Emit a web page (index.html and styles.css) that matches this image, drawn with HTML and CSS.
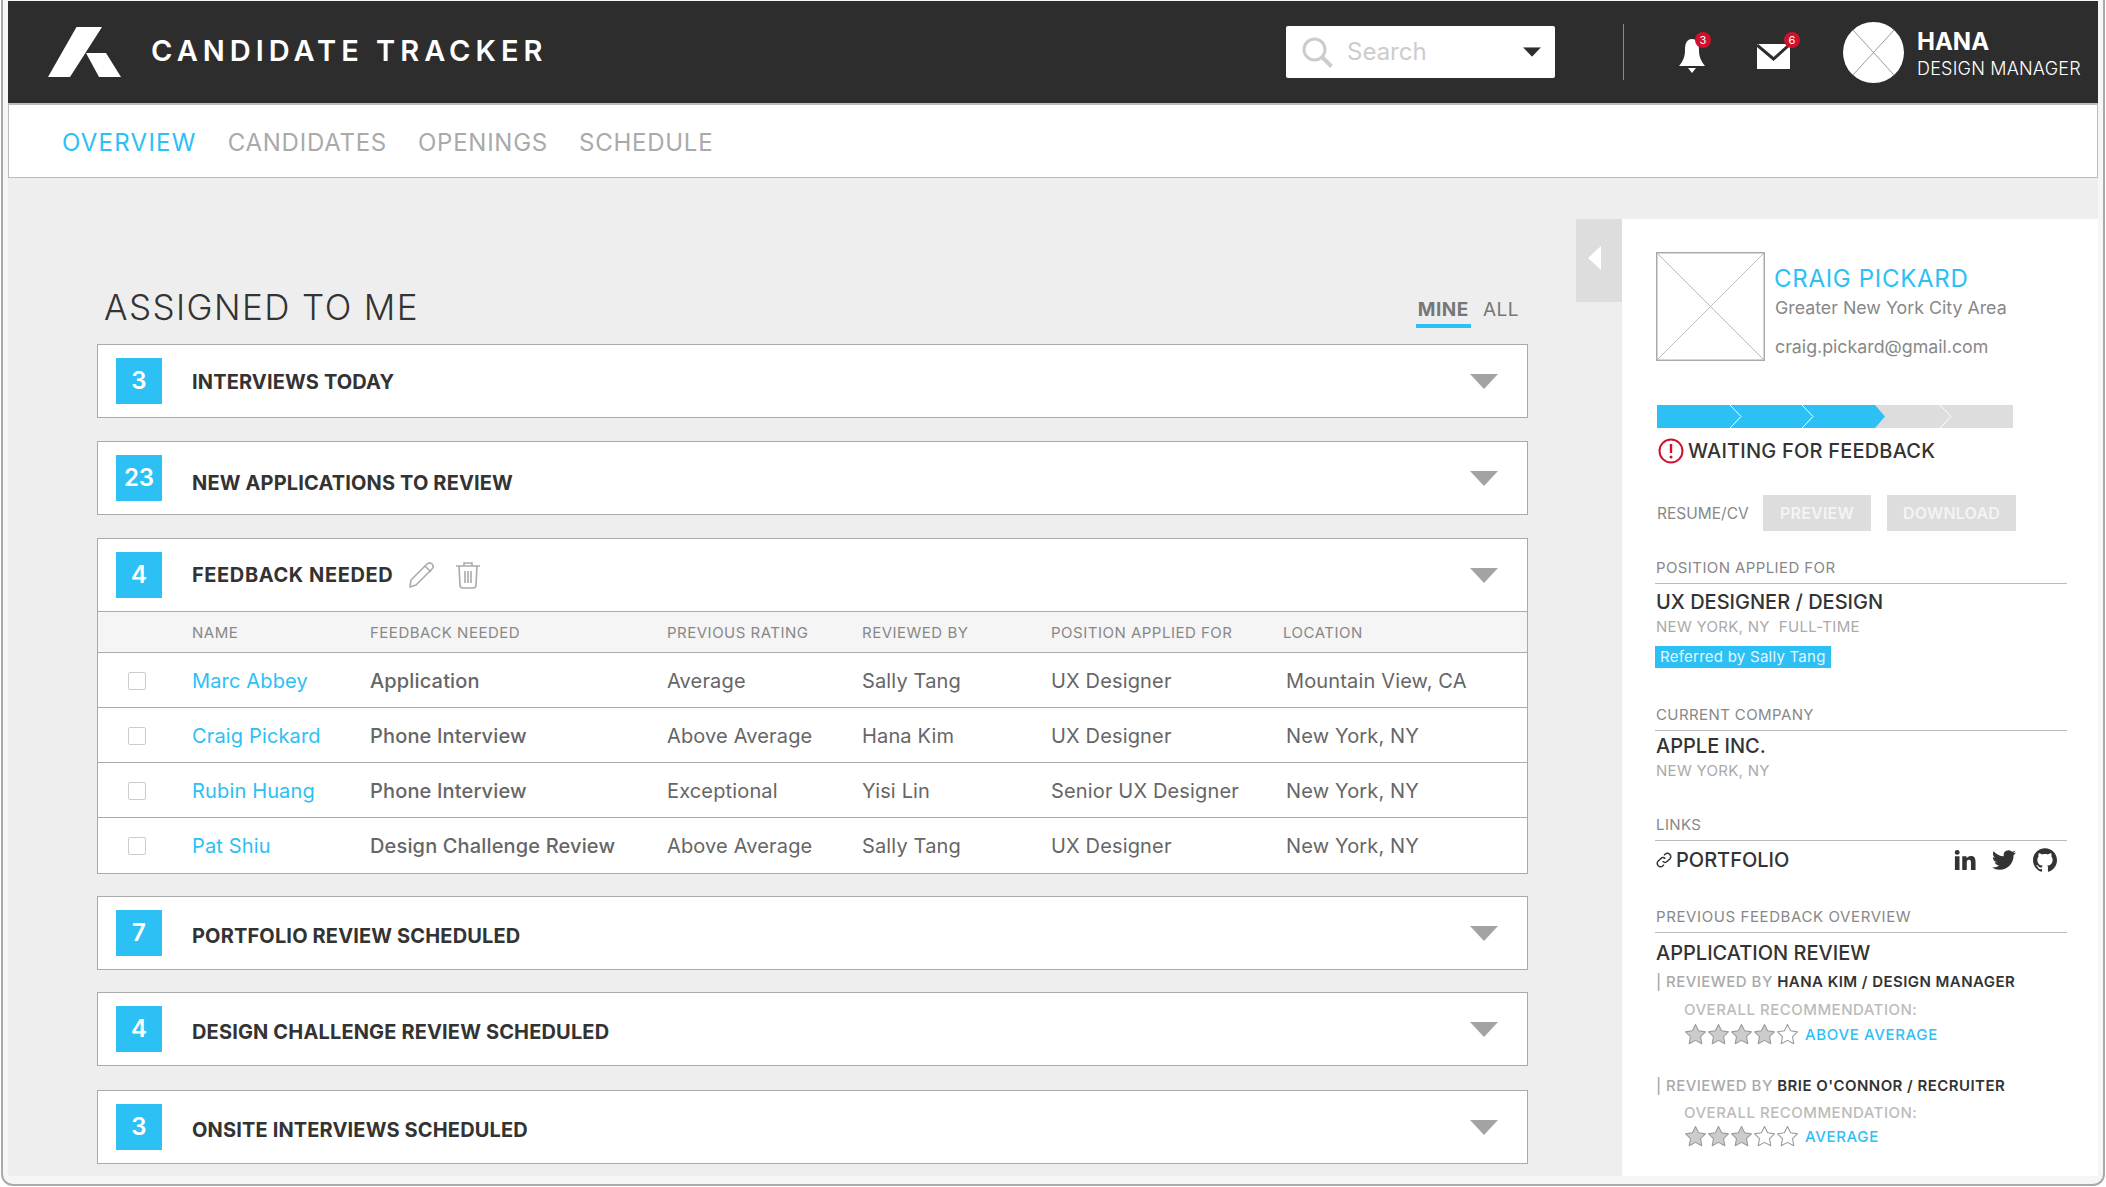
FILE: index.html
```html
<!DOCTYPE html>
<html lang="en">
<head>
<meta charset="utf-8">
<title>Candidate Tracker</title>
<link rel="stylesheet" href="styles.css">
</head>
<body>
<svg class="defs" width="0" height="0" aria-hidden="true">
  <defs>
    <symbol id="star" viewBox="1 1 22 22"><path d="M12 2.500l3 6 6.500 1-4.700 4.500 1.200 6.800-6-3.200-6 3.200 1.200-6.800L2.500 9.500l6.500-1z" stroke-linejoin="round"/></symbol>
    <symbol id="tri" viewBox="0 0 28 15"><path d="M0 0h28L14 15z"/></symbol>
  </defs>
</svg>
<div class="window">
  <header class="topbar">
    <svg class="logo" viewBox="0 0 74 50"><path d="M28.500 0H54L22 50H0z" fill="#fff"/><path d="M38 26h20l15 24H51z" fill="#fff"/></svg>
    <div class="brand">CANDIDATE TRACKER</div>
    <div class="search">
      <svg class="search-icon" viewBox="0 0 31 31"><circle cx="12.500" cy="12.500" r="10.500" fill="none" stroke="#ccc" stroke-width="3"/><path d="M20 20l9.500 9.500" stroke="#ccc" stroke-width="4"/></svg>
      <span class="search-text">Search</span>
      <svg class="search-caret" viewBox="0 0 28 15"><use href="#tri"/></svg>
    </div>
    <div class="divider"></div>
    <div class="alert alert-bell">
      <svg class="bell" viewBox="0 0 26 34"><path d="M13 0c5 0 7 4 7 11 0 7 2 11 6 16H0c4-5 6-9 6-16C6 4 8 0 13 0z" fill="#fff"/><path d="M9 29h8l-4 5z" fill="#fff"/></svg>
      <span class="badge">3</span>
    </div>
    <div class="alert alert-mail">
      <svg class="mail" viewBox="0 0 33 25"><rect width="33" height="25" fill="#fff"/><path d="M0 1l16.500 14L31 2" fill="none" stroke="#2d2d2d" stroke-width="3"/></svg>
      <span class="badge">6</span>
    </div>
    <svg class="avatar" viewBox="0 0 62 62"><circle cx="31" cy="31" r="31" fill="#fff"/><path d="M10 8l42 46M52 8L10 54" stroke="#999" stroke-width="1"/></svg>
    <div class="user">
      <div class="user-name">HANA</div>
      <div class="user-role">DESIGN MANAGER</div>
    </div>
  </header>

  <nav class="tabs">
    <a class="tab tab-active">OVERVIEW</a>
    <a class="tab">CANDIDATES</a>
    <a class="tab">OPENINGS</a>
    <a class="tab">SCHEDULE</a>
  </nav>

  <div class="main">
    <main class="content">
      <div class="heading">
        <h1>ASSIGNED TO ME</h1>
        <div class="filter">
          <span class="filter-on">MINE</span>
          <span class="filter-off">ALL</span>
        </div>
      </div>

      <section class="panel">
        <div class="panel-head"><span class="count">3</span><span class="panel-title">INTERVIEWS TODAY</span><svg class="caret" viewBox="0 0 28 15"><use href="#tri"/></svg></div>
      </section>

      <section class="panel">
        <div class="panel-head panel-head-low"><span class="count">23</span><span class="panel-title">NEW APPLICATIONS TO REVIEW</span><svg class="caret" viewBox="0 0 28 15"><use href="#tri"/></svg></div>
      </section>

      <section class="panel panel-tight">
        <div class="panel-head panel-head-level">
          <span class="count">4</span><span class="panel-title">FEEDBACK NEEDED</span>
          <svg class="tool tool-edit" viewBox="0 0 28 28"><path d="M3 19L19 3c2-2 4-1 5 0s2 3 0 5L8 24l-6 2z M17 5l6 6" fill="none" stroke="#aaa" stroke-width="1.600" stroke-linejoin="round"/></svg>
          <svg class="tool tool-trash" viewBox="0 0 26 28"><path d="M1 5h24M9 5V2h8v3M4 5l1 19c0 2 1 3 3 3h10c2 0 3-1 3-3l1-19M10 10v12M13 10v12M16 10v12" fill="none" stroke="#aaa" stroke-width="1.600"/></svg>
          <svg class="caret" viewBox="0 0 28 15"><use href="#tri"/></svg>
        </div>
        <table class="grid">
          <colgroup><col class="c-check"><col class="c-name"><col class="c-need"><col class="c-prev"><col class="c-by"><col class="c-pos"><col class="c-loc"></colgroup>
          <thead>
            <tr><th></th><th>NAME</th><th>FEEDBACK NEEDED</th><th>PREVIOUS RATING</th><th>REVIEWED BY</th><th>POSITION APPLIED FOR</th><th>LOCATION</th></tr>
          </thead>
          <tbody>
            <tr><td><span class="check"></span></td><td class="person">Marc Abbey</td><td class="need">Application</td><td>Average</td><td>Sally Tang</td><td>UX Designer</td><td class="place">Mountain View, CA</td></tr>
            <tr><td><span class="check"></span></td><td class="person">Craig Pickard</td><td class="need">Phone Interview</td><td>Above Average</td><td>Hana Kim</td><td>UX Designer</td><td class="place">New York, NY</td></tr>
            <tr><td><span class="check"></span></td><td class="person">Rubin Huang</td><td class="need">Phone Interview</td><td>Exceptional</td><td>Yisi Lin</td><td>Senior UX Designer</td><td class="place">New York, NY</td></tr>
            <tr><td><span class="check"></span></td><td class="person">Pat Shiu</td><td class="need">Design Challenge Review</td><td>Above Average</td><td>Sally Tang</td><td>UX Designer</td><td class="place">New York, NY</td></tr>
          </tbody>
        </table>
      </section>

      <section class="panel panel-tight">
        <div class="panel-head panel-head-mid"><span class="count">7</span><span class="panel-title">PORTFOLIO REVIEW SCHEDULED</span><svg class="caret" viewBox="0 0 28 15"><use href="#tri"/></svg></div>
      </section>
      <section class="panel panel-wide">
        <div class="panel-head panel-head-mid"><span class="count">4</span><span class="panel-title">DESIGN CHALLENGE REVIEW SCHEDULED</span><svg class="caret" viewBox="0 0 28 15"><use href="#tri"/></svg></div>
      </section>
      <section class="panel">
        <div class="panel-head panel-head-mid"><span class="count">3</span><span class="panel-title">ONSITE INTERVIEWS SCHEDULED</span><svg class="caret" viewBox="0 0 28 15"><use href="#tri"/></svg></div>
      </section>
    </main>

    <div class="collapse"><svg viewBox="0 0 13 24"><path d="M13 0v24L0 12z" fill="#fff"/></svg></div>

    <aside class="detail">
      <div class="profile">
        <svg class="photo" viewBox="0 0 109 109"><rect x=".75" y=".75" width="107.500" height="107.500" fill="#fff" stroke="#aaa" stroke-width="1.500"/><path d="M1 1l107 107M108 1L1 108" stroke="#bbb" stroke-width="1"/></svg>
        <div class="profile-text">
          <div class="profile-name">CRAIG PICKARD</div>
          <div class="profile-line">Greater New York City Area</div>
          <div class="profile-line profile-mail">craig.pickard@gmail.com</div>
        </div>
      </div>

      <svg class="progress" viewBox="0 0 356 23">
        <rect width="356" height="23" fill="#ddd"/>
        <path d="M0 0h218l10 11.500-10 11.500H0z" fill="#2cc0f5"/>
        <path d="M73 0l11 11.500L73 23M145 0l11 11.500L145 23" fill="none" stroke="#fff" stroke-width="1"/>
        <path d="M283 0l11 11.500L283 23" fill="none" stroke="#fff" stroke-width="1"/>
      </svg>

      <div class="status">
        <svg class="status-icon" viewBox="0 0 26 26"><circle cx="13" cy="13" r="11.500" fill="none" stroke="#d0112b" stroke-width="2"/><path d="M13 6v9" stroke="#d0112b" stroke-width="2.400"/><circle cx="13" cy="19" r="1.500" fill="#d0112b"/></svg>
        <span>WAITING FOR FEEDBACK</span>
      </div>

      <div class="resume">
        <span class="resume-label">RESUME/CV</span>
        <span class="btn btn-preview">PREVIEW</span>
        <span class="btn btn-download">DOWNLOAD</span>
      </div>

      <div class="sec sec-position">
        <div class="sec-label">POSITION APPLIED FOR</div>
        <div class="sec-title">UX DESIGNER / DESIGN</div>
        <div class="sec-sub">NEW YORK, NY &nbsp;FULL-TIME</div>
        <div class="referred">Referred by Sally Tang</div>
      </div>

      <div class="sec sec-company">
        <div class="sec-label">CURRENT COMPANY</div>
        <div class="sec-title">APPLE INC.</div>
        <div class="sec-sub">NEW YORK, NY</div>
      </div>

      <div class="sec sec-links">
        <div class="sec-label">LINKS</div>
        <div class="links-row">
          <svg class="link-icon" viewBox="0 0 24 24"><path d="M10 14a5 5 0 0 0 7 0l4-4a5 5 0 0 0-7-7l-2 2M14 10a5 5 0 0 0-7 0l-4 4a5 5 0 0 0 7 7l2-2" fill="none" stroke="#333" stroke-width="2.200"/></svg>
          <span class="portfolio">PORTFOLIO</span>
          <svg class="social social-in" viewBox="0 0 24 24"><path fill="#333" d="M1 8h5v15H1zM3.500 1a2.700 2.700 0 1 1 0 5.400 2.700 2.700 0 0 1 0-5.400zM9 8h4.700v2.100C14.500 8.700 16.200 7.600 18.400 7.600c4.300 0 5.100 2.900 5.100 6.600V23h-5v-7.700c0-1.900-.1-3.600-2.200-3.600s-2.400 1.700-2.400 3.500V23H9z"/></svg>
          <svg class="social social-tw" viewBox="0 0 24 24"><path fill="#333" d="M23.953 4.570a10 10 0 01-2.825.775 4.958 4.958 0 002.163-2.723c-.951.555-2.005.959-3.127 1.184a4.920 4.920 0 00-8.384 4.482C7.690 8.095 4.067 6.130 1.640 3.162a4.822 4.822 0 00-.666 2.475c0 1.710.870 3.213 2.188 4.096a4.904 4.904 0 01-2.228-.616v.06a4.923 4.923 0 003.946 4.827 4.996 4.996 0 01-2.212.085 4.936 4.936 0 004.604 3.417 9.867 9.867 0 01-6.102 2.105c-.390 0-.779-.023-1.170-.067a13.995 13.995 0 007.557 2.209c9.053 0 13.998-7.496 13.998-13.985 0-.210 0-.420-.015-.630A9.935 9.935 0 0024 4.590z"/></svg>
          <svg class="social social-gh" viewBox="0 0 24 24"><path fill="#333" d="M12 .297c-6.630 0-12 5.373-12 12 0 5.303 3.438 9.800 8.205 11.385.6.113.820-.258.820-.577 0-.285-.010-1.040-.015-2.040-3.338.724-4.042-1.610-4.042-1.610C4.422 18.070 3.633 17.700 3.633 17.700c-1.087-.744.084-.729.084-.729 1.205.084 1.838 1.236 1.838 1.236 1.070 1.835 2.809 1.305 3.495.998.108-.776.417-1.305.760-1.605-2.665-.3-5.466-1.332-5.466-5.930 0-1.310.465-2.380 1.235-3.220-.135-.303-.540-1.523.105-3.176 0 0 1.005-.322 3.300 1.230.960-.267 1.980-.399 3-.405 1.020.006 2.040.138 3 .405 2.280-1.552 3.285-1.230 3.285-1.230.645 1.653.240 2.873.120 3.176.765.840 1.230 1.910 1.230 3.220 0 4.610-2.805 5.625-5.475 5.920.420.360.810 1.096.810 2.220 0 1.606-.015 2.896-.015 3.286 0 .315.210.690.825.570C20.565 22.092 24 17.592 24 12.297c0-6.627-5.373-12-12-12"/></svg>
        </div>
      </div>

      <div class="sec sec-feedback">
        <div class="sec-label">PREVIOUS FEEDBACK OVERVIEW</div>
        <div class="sec-title">APPLICATION REVIEW</div>
        <div class="review">
          <div class="review-by">| REVIEWED BY <b>HANA KIM / DESIGN MANAGER</b></div>
          <div class="review-label">OVERALL RECOMMENDATION:</div>
          <div class="rating">
            <svg class="star on"><use href="#star"/></svg><svg class="star on"><use href="#star"/></svg><svg class="star on"><use href="#star"/></svg><svg class="star on"><use href="#star"/></svg><svg class="star"><use href="#star"/></svg>
            <span class="rating-text">ABOVE AVERAGE</span>
          </div>
        </div>
        <div class="review review-second">
          <div class="review-by">| REVIEWED BY <b>BRIE O'CONNOR / RECRUITER</b></div>
          <div class="review-label">OVERALL RECOMMENDATION:</div>
          <div class="rating">
            <svg class="star on"><use href="#star"/></svg><svg class="star on"><use href="#star"/></svg><svg class="star on"><use href="#star"/></svg><svg class="star"><use href="#star"/></svg><svg class="star"><use href="#star"/></svg>
            <span class="rating-text">AVERAGE</span>
          </div>
        </div>
      </div>
    </aside>
  </div>
</div>
</body>
</html>
```

FILE: styles.css
```css
* { box-sizing: border-box; }
html, body { margin: 0; padding: 0; height: 100%; background: #fff; }
body { font-family: Inter, "Noto Sans", "Liberation Sans", sans-serif; color: #333; overflow: hidden; }
.defs { display: block; height: 0; }

.window {
  width: 2104px; height: 1186px; margin-left: 1px; padding: 1px 5px 8px 5px;
  border: 2px solid #aaa; border-top: 0; border-radius: 0 0 12px 12px;
  background: #f6f6f6; display: flex; flex-direction: column;
}

/* top bar */
.topbar { height: 102px; flex: none; background: #2d2d2d; display: flex; align-items: center; }
.logo { width: 74px; height: 50px; margin-left: 40px; flex: none; }
.brand { margin: -4px 0 0 29px; width: 1135px; flex: none; color: #fff; font-size: 29px; font-weight: 600; letter-spacing: 5px; }
.search { width: 269px; height: 52px; background: #fff; border-radius: 2px; display: flex; align-items: center; padding-left: 16px; flex: none; }
.search-icon { width: 31px; height: 31px; flex: none; }
.search-text { margin: -2px 0 0 14px; font-size: 24px; color: #ccc; width: 176px; flex: none; }
.search-caret { width: 18px; height: 10px; fill: #2d2d2d; flex: none; }
.divider { width: 1px; height: 56px; margin-left: 68px; background: #888; flex: none; }
.alert { position: relative; flex: none; margin-top: 8px; }
.alert-bell { margin-left: 55px; width: 26px; height: 34px; }
.alert-mail { margin-left: 52px; width: 33px; height: 25px; }
.bell, .mail { display: block; width: 100%; height: 100%; }
.badge { position: absolute; width: 16px; height: 16px; border-radius: 50%; background: #d0112b; color: #fff; font-size: 11px; line-height: 16px; text-align: center; }
.alert-bell .badge { top: -7px; left: 16px; }
.alert-mail .badge { top: -12px; left: 27px; }
.avatar { width: 61px; height: 61px; margin-left: 53px; flex: none; }
.user { margin: 3px 0 0 13px; color: #fff; flex: none; }
.user-name { font-size: 24px; font-weight: 700; line-height: 30px; }
.user-role { font-size: 18px; font-weight: 300; line-height: 24px; letter-spacing: .2px; white-space: nowrap; }

/* nav */
.tabs { height: 75px; flex: none; background: #fff; border: 1px solid #bbb; border-top: 2px solid #bbb; display: flex; align-items: center; padding: 2px 0 0 53px; gap: 31px; }
.tab { font-size: 24px; color: #aaa; letter-spacing: .75px; }
.tab-active { color: #2cc0f5; letter-spacing: 1.250px; }

/* main */
.main { flex: 1; min-height: 0; background: #eee; display: flex; }
.content { width: 1568px; flex: none; padding: 0 48px 0 89px; }
.heading { height: 166px; display: flex; align-items: flex-end; justify-content: space-between; padding: 0 9px 16px 7px; }
h1 { margin: 0; font-size: 35px; font-weight: 300; line-height: 42px; letter-spacing: 1.400px; color: #333; }
.filter { display: flex; gap: 12px; font-size: 19px; height: 42px; color: #777; }
.filter-on { font-weight: 700; border-bottom: 4px solid #2cc0f5; padding: 0 2px; letter-spacing: .5px; height: 42px; line-height: 48px; }
.filter-off { font-weight: 400; line-height: 48px; letter-spacing: .5px; }

.panel { background: #fff; border: 1px solid #aaa; margin-bottom: 23px; }
.panel-tight { margin-bottom: 22px; }
.panel-wide { margin-bottom: 24px; }
.panel-head { height: 72px; display: flex; align-items: center; padding: 0 29px 0 18px; }
.count { width: 46px; height: 46px; flex: none; background: #2cc0f5; color: #fff; font-size: 24px; font-weight: 600; display: flex; align-items: center; justify-content: center; padding-bottom: 1px; }
.panel-title { margin: 2px 0 0 30px; font-size: 20px; font-weight: 700; color: #333; letter-spacing: .15px; }
.panel-head-low .panel-title { margin-top: 10px; }
.panel-head-level .panel-title { margin-top: 0; letter-spacing: .6px; }
.panel-head-mid .panel-title { margin-top: 6px; }
.panel-head-mid .caret { margin-top: 2px; }
.caret { width: 28px; height: 15px; margin-left: auto; fill: #a3a3a3; flex: none; }
.tool { flex: none; }
.tool-edit { width: 28px; height: 28px; margin-left: 15px; }
.tool-trash { width: 26px; height: 28px; margin-left: 19px; }

.grid { width: 100%; border-collapse: collapse; table-layout: fixed; }
.c-check { width: 94px; } .c-name { width: 178px; } .c-need { width: 297px; } .c-prev { width: 195px; }
.c-by { width: 189px; } .c-pos { width: 232px; }
.grid th { height: 41px; background: #f5f5f5; border-top: 1px solid #aaa; border-bottom: 1px solid #aaa; font-size: 15px; font-weight: 400; letter-spacing: .5px; color: #888; text-align: left; padding: 0; white-space: nowrap; }
.grid td { height: 55px; border-bottom: 1px solid #aaa; font-size: 20px; letter-spacing: .15px; color: #666; padding: 2px 0 0; white-space: nowrap; }
.grid tbody tr:last-child td { border-bottom: 0; }
.check { display: block; width: 18px; height: 18px; margin-left: 30px; border: 1.500px solid #ccc; border-radius: 2px; background: #fff; }
.grid .person { color: #2cc0f5; }
.grid .need { font-weight: 500; color: #666; }
.grid .place { padding-left: 3px; }

/* side */
.collapse { width: 46px; height: 83px; margin-top: 41px; background: #ddd; flex: none; padding: 27px 0 0 12px; }
.collapse svg { display: block; width: 13px; height: 24px; }
.detail { width: 476px; flex: none; margin-top: 41px; background: #fff; padding: 33px 31px 0 34px; }
.profile { display: flex; }
.photo { width: 109px; height: 109px; flex: none; }
.profile-text { margin-left: 10px; }
.profile-name { color: #2cc0f5; font-size: 24px; line-height: 30px; margin: 12px 0 0 -1px; letter-spacing: .7px; white-space: nowrap; }
.profile-line { font-size: 17.800px; line-height: 24px; color: #888; margin-top: 2px; white-space: nowrap; }
.profile-mail { margin-top: 15px; }
.progress { display: block; width: 356px; height: 23px; margin: 44px 0 0 1px; }
.status { display: flex; align-items: center; margin: 9px 0 0 2px; height: 28px; font-size: 20px; font-weight: 500; letter-spacing: .2px; color: #333; white-space: nowrap; }
.status-icon { width: 26px; height: 26px; margin-right: 4px; flex: none; }
.resume { display: flex; align-items: center; margin: 30px 0 0 1px; height: 36px; }
.resume-label { width: 106px; font-size: 15.500px; color: #888; flex: none; }
.btn { height: 36px; background: #ddd; color: #f4f4f4; font-size: 16px; font-weight: 600; letter-spacing: .2px; display: flex; align-items: center; justify-content: center; flex: none; }
.btn-preview { width: 108px; }
.btn-download { width: 129px; margin-left: 16px; }

.sec { margin-left: -1px; }
.sec-label { font-size: 15px; line-height: 20px; letter-spacing: .4px; color: #888; border-bottom: 1px solid #bbb; height: 27px; padding: 1px 0 0 1px; white-space: nowrap; }
.sec-title { font-size: 20px; line-height: 26px; font-weight: 500; color: #333; margin-top: 5px; padding-left: 1px; white-space: nowrap; }
.sec-sub { font-size: 15px; line-height: 20px; letter-spacing: .3px; color: #aaa; margin-top: 2px; padding-left: 1px; white-space: nowrap; }
.sec-position { margin-top: 26px; }
.referred { display: inline-block; height: 22px; line-height: 22px; background: #2cc0f5; color: #e4f7fe; font-size: 15px; letter-spacing: .25px; padding: 0 5px; margin-top: 9px; white-space: nowrap; }
.sec-company { margin-top: 36px; }
.sec-company .sec-title { margin-top: 2px; }
.sec-links { margin-top: 33px; }
.links-row { display: flex; align-items: center; height: 38px; }
.link-icon { width: 16px; height: 16px; margin-left: 1px; flex: none; }
.portfolio { margin-left: 4px; font-size: 20px; font-weight: 500; color: #333; }
.social { flex: none; }
.social-in { width: 22px; height: 22px; margin-left: auto; }
.social-tw { width: 26px; height: 24px; margin-left: 15px; }
.social-gh { width: 24px; height: 24px; margin: 0 10px 0 16px; }
.sec-feedback { margin-top: 27px; }
.sec-feedback .sec-label { letter-spacing: .6px; }
.sec-feedback .sec-title { margin-top: 7px; }
.review { margin-top: 6px; }
.review-second { margin-top: 30px; }
.review-by { font-size: 15px; line-height: 20px; letter-spacing: .45px; color: #aaa; font-weight: 500; padding-left: 1px; white-space: nowrap; }
.review-by b { color: #333; font-weight: 600; }
.review-label { font-size: 15px; line-height: 20px; letter-spacing: .5px; color: #bbb; font-weight: 500; margin: 8px 0 0 29px; white-space: nowrap; }
.review-second .review-label { margin-top: 7px; }
.rating { display: flex; align-items: center; margin: 2px 0 0 29px; height: 24px; }
.review-second .rating { margin-top: 1px; }
.star { width: 23px; height: 23px; flex: none; fill: #fff; stroke: #999; stroke-width: 1; }
.star.on { fill: #ccc; }
.rating-text { margin-left: 6px; font-size: 15px; font-weight: 500; letter-spacing: .65px; color: #2cc0f5; white-space: nowrap; }
```
